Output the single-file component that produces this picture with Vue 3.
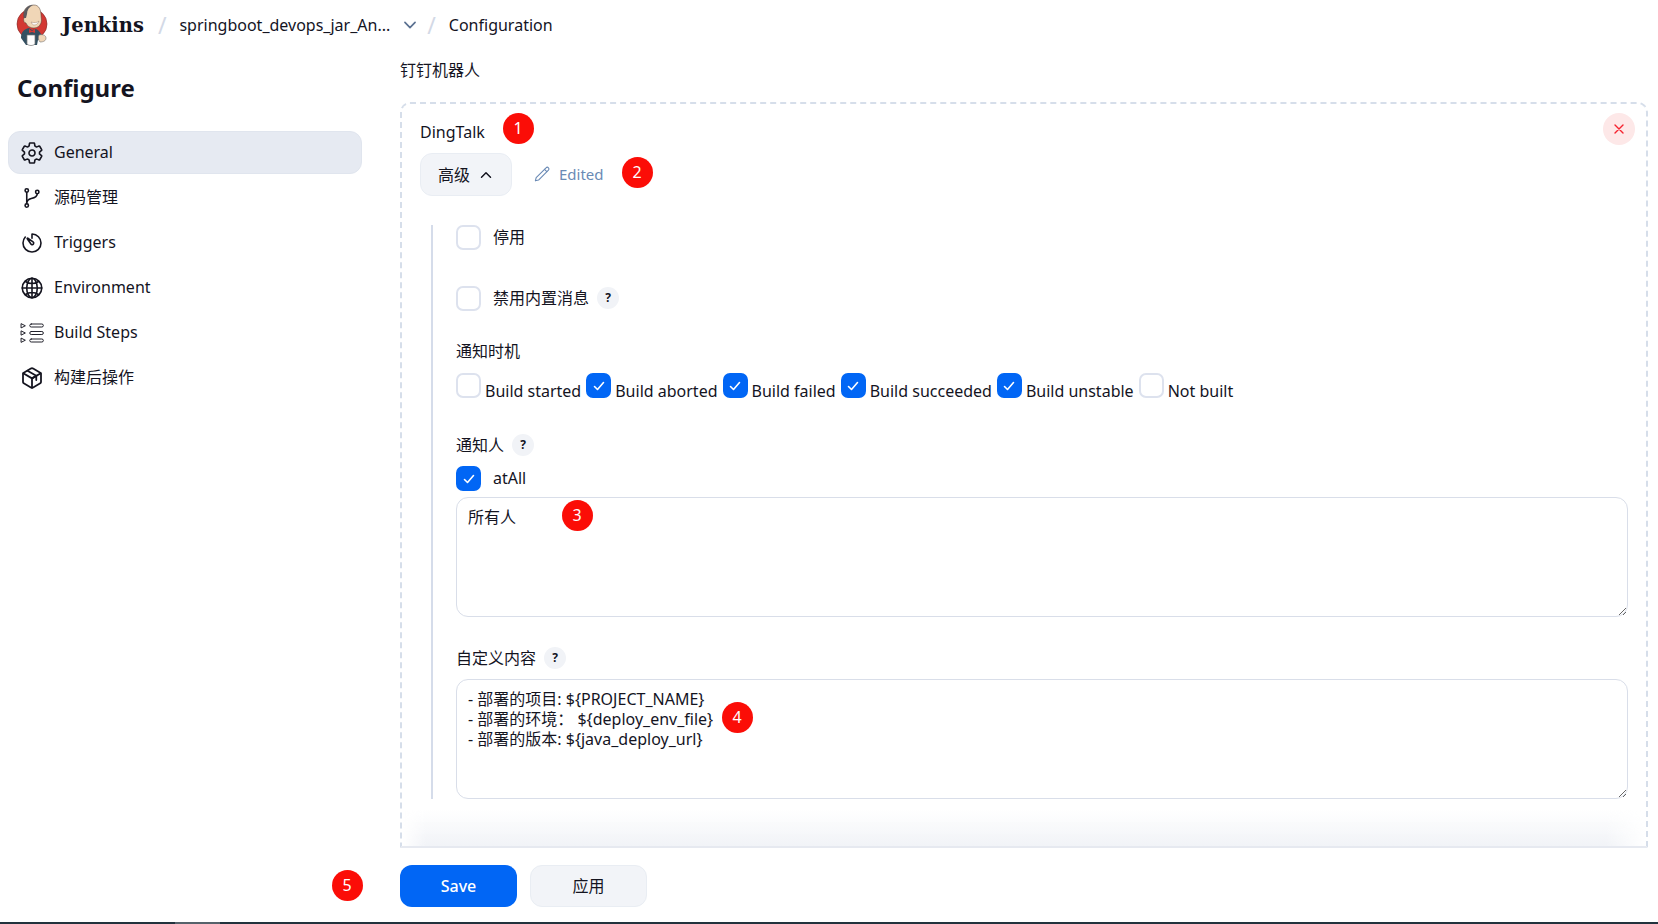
<template>
  <div class="page">
    <header class="topbar">
      <svg class="logo" viewBox="0 0 32 42">
        <circle cx="16" cy="20" r="15" fill="#d33833" stroke="#7d2320" stroke-width="0.6" />
        <path d="M8 8C9 3 14 1 18 1c5 0 7 5 7 10 0 3 1 5 0 8-1 3-4 5-7 5-4 0-7-2-8-5-2 0-3-3-2-5z" fill="#f0d6b7" stroke="#4a3a32" stroke-width="0.5" />
        <path d="M8 14C6 7 11 1 17 1c-4 2-6 5-6 9l-1 4z" fill="#5a5a5f" />
        <path d="M15 18c3 1 6 1 8-1-1 3-3 4-5 4-1 0-2-1-3-3z" fill="#fff" stroke="#8a6a55" stroke-width="0.4" />
        <path d="M5 34c0-6 3-9 8-10l3 2 4-1c4 2 6 6 6 9l-4 2-1 5H10z" fill="#335061" />
        <path d="M13 25l3 2 3-2v4l-3-1-3 1z" fill="#d33833" />
        <path d="M11 31h8v9c-2 2-6 2-8 0z" fill="#fff" stroke="#777" stroke-width="0.7" />
        <path d="M23 31c3-1 7 0 7 3s-3 4-6 4c-2-2-2-5-1-7z" fill="#f0d6b7" stroke="#777" stroke-width="0.6" />
      </svg>
      <span class="brand">Jenkins</span>
      <span class="slash">/</span>
      <span class="crumb">springboot_devops_jar_An...</span>
      <svg class="crumb-arrow" viewBox="0 0 512 512">
        <path fill="none" stroke="currentColor" stroke-linecap="round" stroke-linejoin="round" stroke-width="48" d="M112 184l144 144 144-144" />
      </svg>
      <span class="slash">/</span>
      <span class="crumb">Configuration</span>
    </header>

    <div class="content">
      <aside class="sidebar">
        <h1 class="side-title">Configure</h1>
        <nav class="side-nav">
          <a v-for="item in navItems" :key="item.label" class="nav-item" :class="{ active: item.active }">
            <svg class="nav-icon" viewBox="0 0 512 512" fill="none" stroke="currentColor" :stroke-width="item.stroke || 34" stroke-linecap="round" stroke-linejoin="round">
              <path v-for="d in item.paths" :key="d" :d="d" />
            </svg>
            <span class="nudge">{{ item.label }}</span>
          </a>
        </nav>
      </aside>

      <main class="main">
        <div class="section-title">钉钉机器人</div>

        <section class="robot">
          <div class="robot-name">DingTalk</div>
          <button class="close-btn">
            <svg viewBox="0 0 12 12"><path d="M2 2l8 8M10 2l-8 8" /></svg>
          </button>

          <div class="advanced-row">
            <button class="advanced-btn">
              高级
              <svg viewBox="0 0 512 512"><path fill="none" stroke="currentColor" stroke-linecap="round" stroke-linejoin="round" stroke-width="48" d="M112 328l144-144 144 144" /></svg>
            </button>
            <span class="edited">
              <svg viewBox="0 0 24 24" fill="none" stroke="currentColor" stroke-width="1.4" stroke-linecap="round" stroke-linejoin="round">
                <path d="M16.5 3.5a2.1 2.1 0 013 3L7 19l-4 1 1-4z" />
                <path d="M14.5 5.5l3 3" />
              </svg>
              <span class="nudge">Edited</span>
            </span>
          </div>

          <div class="advanced-body">
            <label class="check-row">
              <span class="box"></span>
              <span class="nudge">停用</span>
            </label>

            <label class="check-row mt-36">
              <span class="box"></span>
              <span class="nudge">禁用内置消息</span>
              <span class="help">?</span>
            </label>

            <div class="field-label timing-label">通知时机</div>
            <div class="timing-row">
              <label v-for="t in timings" :key="t.label" class="timing">
                <span class="box" :class="{ on: t.on }">
                  <svg v-if="t.on" viewBox="0 0 16 16"><path d="M3.5 8.5l3 3 6-7" /></svg>
                </span>
                <span class="timing-text">{{ t.label }}</span>
              </label>
            </div>

            <div class="field-label with-help notify-label">通知人 <span class="help">?</span></div>
            <label class="check-row at-all">
              <span class="box on">
                <svg viewBox="0 0 16 16"><path d="M3.5 8.5l3 3 6-7" /></svg>
              </span>
              <span class="nudge">atAll</span>
            </label>
            <textarea class="text-input at-input" readonly :value="atText"></textarea>

            <div class="field-label with-help custom-label">自定义内容 <span class="help">?</span></div>
            <textarea class="text-input custom-input" readonly :value="customText"></textarea>
          </div>

          <div class="robot-fade"></div>
        </section>

        <div class="actions">
          <button class="btn-save">Save</button>
          <button class="btn-apply">应用</button>
        </div>
      </main>
    </div>

    <div class="taskbar"><span class="taskbar-item"></span></div>

    <span v-for="m in marks" :key="m.n" class="mark" :style="{ left: m.x + 'px', top: m.y + 'px' }">{{ m.n }}</span>
  </div>
</template>

<script setup>
const navItems = [
  {
    label: 'General',
    active: true,
    paths: [
      'M262.29 192.31a64 64 0 1057.4 57.4 64.13 64.13 0 00-57.4-57.4zM416.39 256a154.34 154.34 0 01-1.53 20.79l45.21 35.46a10.81 10.81 0 012.45 13.75l-42.77 74a10.81 10.81 0 01-13.14 4.59l-44.9-18.08a16.11 16.11 0 00-15.17 1.75A164.48 164.48 0 01325 400.8a15.94 15.94 0 00-8.82 12.14l-6.73 47.89a11.08 11.08 0 01-10.68 9.17h-85.54a11.11 11.11 0 01-10.69-8.87l-6.72-47.82a16.07 16.07 0 00-9-12.22 155.3 155.3 0 01-21.46-12.57 16 16 0 00-15.11-1.71l-44.89 18.07a10.81 10.81 0 01-13.14-4.58l-42.77-74a10.8 10.8 0 012.45-13.75l38.21-30a16.05 16.05 0 006-14.08c-.36-4.17-.58-8.33-.58-12.5s.21-8.27.58-12.35a16 16 0 00-6.07-13.94l-38.19-30A10.81 10.81 0 0149.48 186l42.77-74a10.81 10.81 0 0113.14-4.59l44.9 18.08a16.11 16.11 0 0015.17-1.75A164.48 164.48 0 01187 111.2a15.94 15.94 0 008.82-12.14l6.73-47.89A11.08 11.08 0 01213.23 42h85.54a11.11 11.11 0 0110.69 8.87l6.72 47.82a16.07 16.07 0 009 12.22 155.3 155.3 0 0121.46 12.57 16 16 0 0015.11 1.71l44.89-18.07a10.81 10.81 0 0113.14 4.58l42.77 74a10.8 10.8 0 01-2.45 13.75l-38.21 30a16.05 16.05 0 00-6.05 14.08c.33 4.14.55 8.3.55 12.47z'
    ]
  },
  {
    label: '源码管理',
    paths: [
      'M180 96a36 36 0 11-72 0 36 36 0 0172 0zM180 416a36 36 0 11-72 0 36 36 0 0172 0zM404 128a36 36 0 11-72 0 36 36 0 0172 0z',
      'M144 132v248M368 164c0 72-64 88-128 104-48 12-96 40-96 112'
    ]
  },
  {
    label: 'Triggers',
    paths: [
      'M112.91 128A191.85 191.85 0 0064 254c-1.18 106.35 85.65 193.8 192 194 106.2.2 192-85.83 192-192 0-104.54-83.55-189.61-187.5-192a4.36 4.36 0 00-4.5 4.37V152',
      'M233.38 278.63l-79-113a8.13 8.13 0 0111.32-11.32l113 79a32.5 32.5 0 01-37.25 53.26 33.21 33.21 0 01-8.07-8.94z'
    ]
  },
  {
    label: 'Environment',
    paths: [
      'M256 48C141.13 48 48 141.13 48 256s93.13 208 208 208 208-93.13 208-208S370.87 48 256 48z',
      'M256 48c-58.07 0-112.67 93.31-112.67 208S197.93 464 256 464s112.67-93.31 112.67-208S314.07 48 256 48z',
      'M117.33 117.33c38.24 27.15 86.38 43.34 138.67 43.34s100.43-16.19 138.67-43.34M394.67 394.67c-38.24-27.15-86.38-43.34-138.67-43.34s-100.43 16.19-138.67 43.34M256 48v416M464 256H48'
    ]
  },
  {
    label: 'Build Steps',
    stroke: 20,
    paths: [
      'M240 64h226a32 32 0 010 64H240a32 32 0 010-64zM240 224h226a32 32 0 010 64H240a32 32 0 010-64zM240 384h226a32 32 0 010 64H240a32 32 0 010-64z',
      'M30 60l84 42-84 42zM30 214l84 42-84 42zM30 368l84 42-84 42z'
    ]
  },
  {
    label: '构建后操作',
    stroke: 38,
    paths: [
      'M448 341.37V170.61A32 32 0 00432.11 143l-152-88.46a47.94 47.94 0 00-48.24 0L79.89 143A32 32 0 0064 170.61v170.76A32 32 0 0079.89 369l152 88.46a48 48 0 0048.24 0l152-88.46A32 32 0 00448 341.37z',
      'M69 153.99l187 110 187-110M256 463.99v-200',
      'M160 100l187 110v90M352 210l-96 54'
    ]
  }
]

const timings = [
  { label: 'Build started', on: false },
  { label: 'Build aborted', on: true },
  { label: 'Build failed', on: true },
  { label: 'Build succeeded', on: true },
  { label: 'Build unstable', on: true },
  { label: 'Not built', on: false }
]

const atText = '所有人'
const customText = '- 部署的项目: ${PROJECT_NAME}\n- 部署的环境： ${deploy_env_file}\n- 部署的版本: ${java_deploy_url}'

const marks = [
  { n: 1, x: 518, y: 128 },
  { n: 2, x: 637, y: 172 },
  { n: 3, x: 577, y: 515 },
  { n: 4, x: 737, y: 717 },
  { n: 5, x: 347, y: 885 }
]
</script>

<style>
html, body {
  margin: 0;
  background: #fff;
}
</style>

<style scoped>
.page {
  position: relative;
  height: 924px;
  overflow: hidden;
  display: flex;
  flex-direction: column;
  background: #fff;
  color: #14141f;
  font-family: "Noto Sans", "Noto Sans CJK SC", sans-serif;
  font-size: 16px;
  line-height: 20px;
}

.topbar {
  height: 50px;
  flex: none;
  display: flex;
  align-items: center;
  padding-left: 16px;
}

.logo {
  width: 32px;
  height: 42px;
  margin-right: 14px;
}

.brand {
  font-family: "DejaVu Serif", "Liberation Serif", serif;
  font-weight: 700;
  font-size: 19.5px;
  margin: 2px 14px 0 0;
}

.slash {
  color: #d3d9e6;
  font-size: 23px;
  margin-right: 13px;
}

.crumb {
  margin-right: 11px;
}

.crumb-arrow {
  width: 18px;
  height: 18px;
  color: #5b7191;
  margin-right: 8px;
}

.content {
  flex: 1;
  display: flex;
  min-height: 0;
}

.sidebar {
  width: 400px;
  flex: none;
}

.side-title {
  margin: 21px 0 0 17px;
  font-size: 24px;
  line-height: 34px;
  font-weight: 700;
}

.side-nav {
  margin: 26px 0 0 8px;
  width: 354px;
  display: flex;
  flex-direction: column;
  gap: 2px;
}

.nav-item {
  height: 43px;
  display: flex;
  align-items: center;
  gap: 10px;
  padding-left: 12px;
  border-radius: 12px;
  box-sizing: border-box;
}

.nav-item.active {
  background: #e6eaf2;
  border: 1px solid #e0e5ee;
  padding-left: 11px;
}

.nav-icon {
  width: 24px;
  height: 24px;
  flex: none;
}

.nudge {
  margin-bottom: 2px;
}

.main {
  flex: 1;
  min-width: 0;
  padding: 10px 10px 0 0;
}

.section-title {
  height: 20px;
}

.robot {
  position: relative;
  height: 746px;
  box-sizing: border-box;
  margin-top: 22px;
  padding: 18px 18px 0;
  border: 2px dashed #d6deea;
  border-bottom: 2px solid #e6e9f0;
  border-radius: 10px 10px 0 0;
  overflow: hidden;
}

.robot-name {
  height: 20px;
}

.close-btn {
  position: absolute;
  top: 9px;
  right: 11px;
  width: 32px;
  height: 32px;
  padding: 10px;
  border: 0;
  border-radius: 50%;
  background: #fde8e8;
}

.close-btn svg {
  display: block;
  width: 12px;
  height: 12px;
}

.close-btn path {
  fill: none;
  stroke: #f5232f;
  stroke-width: 1.4;
  stroke-linecap: round;
}

.advanced-row {
  display: flex;
  align-items: center;
  margin-top: 11px;
}

.advanced-btn {
  width: 92px;
  height: 43px;
  display: flex;
  align-items: center;
  justify-content: center;
  gap: 8px;
  border: 1px solid #e9edf3;
  border-radius: 12px;
  background: #f2f4f8;
  color: inherit;
  font: inherit;
}

.advanced-btn svg {
  width: 16px;
  height: 16px;
}

.edited {
  display: flex;
  align-items: center;
  gap: 7px;
  margin-left: 21px;
  color: #6a8ab5;
  font-size: 15px;
}

.edited svg {
  width: 19px;
  height: 19px;
}

.advanced-body {
  margin: 29px 0 0 11px;
  padding-left: 23px;
  border-left: 2px solid #d5dcea;
}

.check-row {
  display: flex;
  align-items: center;
  gap: 12px;
  height: 25px;
}

.mt-36 {
  margin-top: 36px;
}

.box {
  width: 25px;
  height: 25px;
  flex: none;
  box-sizing: border-box;
  border: 2px solid #dde2ee;
  border-radius: 7px;
  background: #fff;
  display: flex;
  align-items: center;
  justify-content: center;
}

.box.on {
  background: #0166f5;
  border-color: #0166f5;
}

.box svg {
  width: 16px;
  height: 16px;
}

.box path {
  fill: none;
  stroke: #fff;
  stroke-width: 1.6;
  stroke-linecap: round;
  stroke-linejoin: round;
}

.help {
  width: 22px;
  height: 22px;
  flex: none;
  display: inline-flex;
  align-items: center;
  justify-content: center;
  border-radius: 50%;
  background: #f1f3f7;
  font-size: 12px;
  font-weight: 700;
}

.check-row .help {
  margin: 0 0 1px -4px;
}

.field-label {
  height: 20px;
}

.with-help {
  display: flex;
  align-items: center;
  gap: 8px;
  height: 22px;
}

.timing-label {
  margin-top: 30px;
}

.timing-row {
  display: flex;
  margin-top: 12px;
  height: 28px;
}

.timing {
  display: flex;
  align-items: flex-start;
  gap: 4px;
  margin-right: 5px;
}

.timing-text {
  margin-top: 8px;
  white-space: nowrap;
}

.notify-label {
  margin-top: 33px;
}

.at-all {
  margin-top: 10px;
}

.text-input {
  display: block;
  width: 100%;
  height: 120px;
  box-sizing: border-box;
  padding: 9px 11px;
  border: 1px solid #d9dee9;
  border-radius: 12px;
  background: #fff;
  color: inherit;
  font: inherit;
  line-height: 20px;
  outline: none;
}

.at-input {
  margin-top: 6px;
}

.custom-label {
  margin-top: 30px;
}

.custom-input {
  margin-top: 10px;
}

.robot-fade {
  position: absolute;
  left: 0;
  right: 0;
  bottom: 0;
  height: 36px;
  background: linear-gradient(to bottom, rgba(241, 243, 247, 0), #f1f3f7);
  -webkit-mask-image: linear-gradient(to right, transparent, #000 24px, #000 calc(100% - 40px), transparent);
  mask-image: linear-gradient(to right, transparent, #000 24px, #000 calc(100% - 40px), transparent);
}

.actions {
  display: flex;
  gap: 13px;
  margin-top: 17px;
}

.btn-save,
.btn-apply {
  width: 117px;
  height: 42px;
  border-radius: 12px;
  font: inherit;
}

.btn-save {
  border: 0;
  background: #0166f5;
  color: #fff;
  font-weight: 500;
}

.btn-apply {
  border: 1px solid #e9edf3;
  background: #f2f4f8;
  color: inherit;
  font-weight: 400;
}

.taskbar {
  position: relative;
  height: 2px;
  flex: none;
  background: #22323d;
}

.taskbar-item {
  position: absolute;
  left: 175px;
  width: 45px;
  height: 2px;
  background: #56626b;
}

.mark {
  position: absolute;
  width: 31px;
  height: 31px;
  margin: -15.5px 0 0 -15.5px;
  border-radius: 50%;
  background: #fb0d07;
  color: #fff;
  display: flex;
  align-items: center;
  justify-content: center;
  font-size: 16px;
}
</style>
